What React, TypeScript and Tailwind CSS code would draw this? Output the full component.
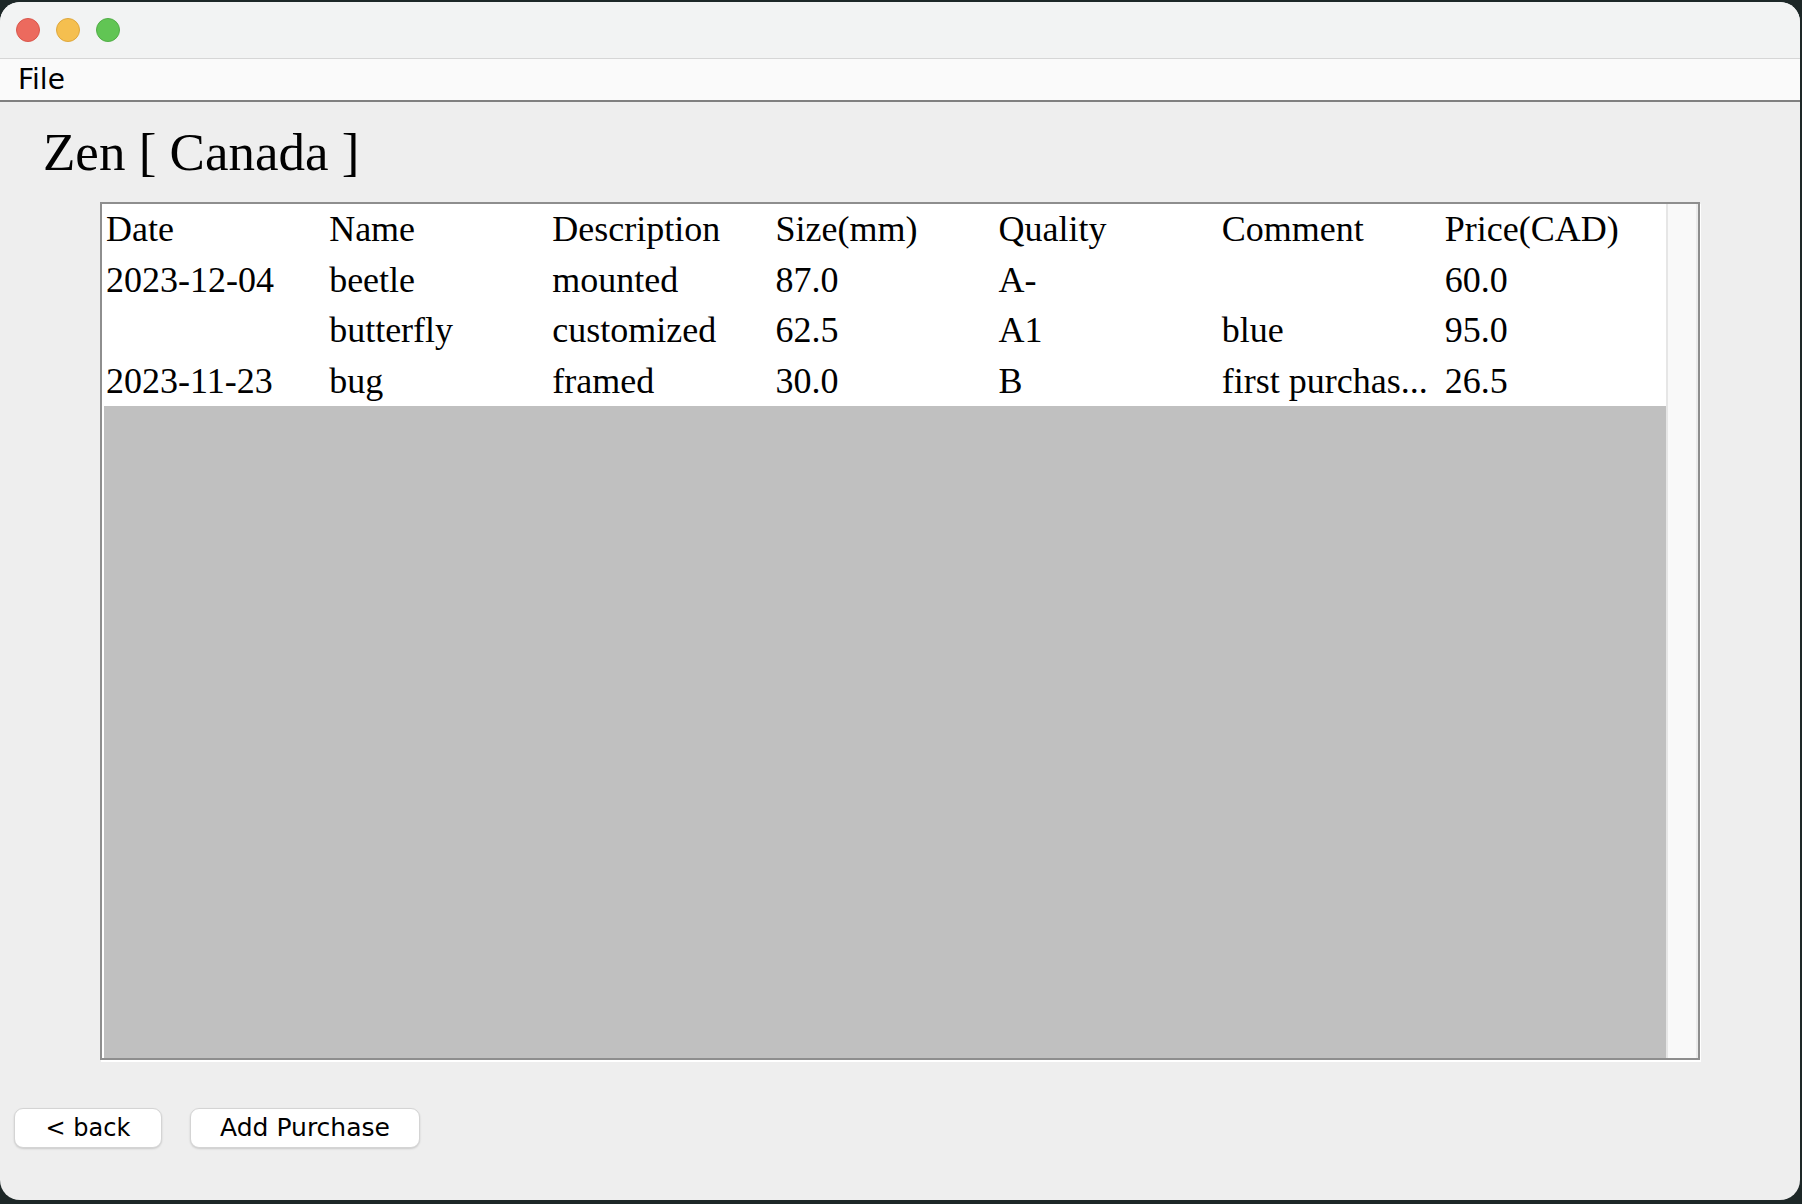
const columns = ["Date", "Name", "Description", "Size(mm)", "Quality", "Comment", "Price(CAD)"];

const rows: string[][] = [
  ["2023-12-04", "beetle", "mounted", "87.0", "A-", "", "60.0"],
  ["", "butterfly", "customized", "62.5", "A1", "blue", "95.0"],
  ["2023-11-23", "bug", "framed", "30.0", "B", "first purchas...", "26.5"],
];

function Row({ cells }: { cells: string[] }) {
  return (
    <div className="grid h-[50.5px] grid-cols-7 items-center bg-white">
      {cells.map((cell, i) => (
        <div key={i} className="overflow-hidden whitespace-nowrap pl-[2px] text-[36px] leading-[50px] text-black">
          {cell}
        </div>
      ))}
    </div>
  );
}

export default function App() {
  return (
    <div className="h-[1204px] w-[1802px] overflow-hidden bg-[#1d2727] pb-[4px] pr-[2px] pt-[2px]">
      <div className="flex h-full flex-col overflow-hidden rounded-[20px] bg-[#eeeeee]">
        {/* title bar */}
        <div className="flex h-[57px] shrink-0 items-center gap-4 border-b border-[#d6d6d6] bg-[#f2f3f3] pl-4">
          <span className="h-6 w-6 rounded-full border border-[#d9574c] bg-[#ec6a5e]" />
          <span className="h-6 w-6 rounded-full border border-[#dea73d] bg-[#f5bf4f]" />
          <span className="h-6 w-6 rounded-full border border-[#52ad47] bg-[#61c554]" />
        </div>

        {/* menu */}
        <div
          className="flex h-[43px] shrink-0 items-center border-b-2 border-[#808080] bg-[#fafafa] pl-[18px] text-[28px] text-black"
          style={{ fontFamily: '"DejaVu Sans", sans-serif' }}
        >
          File
        </div>

        <div className="flex flex-1 flex-col" style={{ fontFamily: '"Liberation Serif", "Times New Roman", serif' }}>
          <h1 className="ml-[43px] mt-[24px] text-[53px] leading-none text-black">Zen [ Canada ]</h1>

          <div className="ml-[100px] mt-[23px] flex h-[858px] w-[1600px] border-2 border-[#8e8e8e] shadow-[1px_2px_0_#ffffff]">
            <div className="flex flex-1 flex-col bg-white pl-[2px]">
              <Row cells={columns} />
              {rows.map((r, i) => (
                <Row key={i} cells={r} />
              ))}
              <div className="flex-1 bg-[#c0c0c0]" />
            </div>
            <div className="w-[32px] border-l-2 border-r-2 border-l-[#e6e6e6] border-r-[#ececec] bg-[#f9f9f9]" />
          </div>

          <div className="ml-[14px] mt-[48px] flex gap-[28px]" style={{ fontFamily: '"DejaVu Sans", sans-serif' }}>
            <button className="flex h-[40px] w-[148px] items-center justify-center rounded-[9px] border border-[#d4d4d4] bg-white text-[24px] text-black shadow-[0_1px_2px_rgba(0,0,0,0.15)]">
              &lt; back
            </button>
            <button className="flex h-[40px] w-[230px] items-center justify-center rounded-[9px] border border-[#d4d4d4] bg-white text-[25px] text-black shadow-[0_1px_2px_rgba(0,0,0,0.15)]">
              Add Purchase
            </button>
          </div>
        </div>
      </div>
    </div>
  );
}
